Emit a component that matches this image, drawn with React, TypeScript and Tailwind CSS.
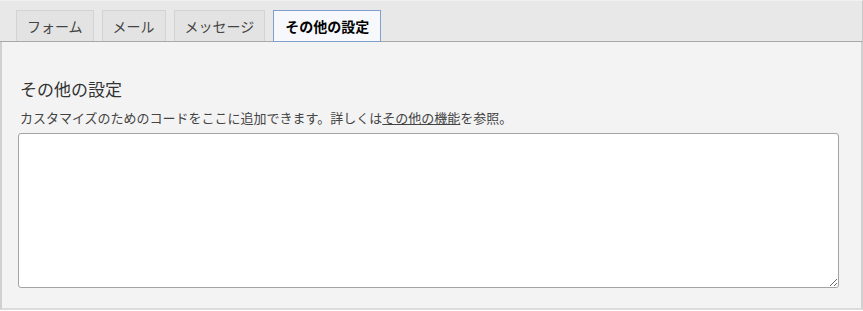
import { type JSX } from "react";

const tabs = ["フォーム", "メール", "メッセージ", "その他の設定"];

export default function App(): JSX.Element {
  const active = 3;
  return (
    <div
      className="w-[863px] h-[311px] bg-white text-[#333]"
      style={{ fontFamily: '"Noto Sans CJK JP", "Noto Sans", sans-serif' }}
    >
      {/* タブ */}
      <div className="h-[42px] bg-[#e8e8e8] border-t border-[#f0f0f0] border-r border-r-[#c8c8c8] border-b border-b-[#a8a8a8] flex items-end gap-2 pl-4">
        {tabs.map((t, i) => (
          <div
            key={t}
            className={
              i === active
                ? "h-[32px] px-[11px] flex items-center text-[14px] font-bold text-black bg-[#f6f8fc] border border-[#7f9fcf] -mb-px"
                : "h-[31px] px-[10px] flex items-center text-[14px] text-[#444] bg-[#e3e3e3] border border-[#d3d3d3] border-b-0"
            }
          >
            {t}
          </div>
        ))}
      </div>

      {/* パネル */}
      <div className="h-[268px] bg-[#f3f3f3] border-l-2 border-l-[#d0d0d0] border-r-2 border-r-[#d0d0d0] border-b-2 border-b-[#dcdcdc] pl-[16px] pr-[23px] pt-[35px]">
        <h2 className="text-[17px] leading-[24px] text-[#333] pl-[2px]">その他の設定</h2>
        <p className="mt-[8px] text-[13px] leading-[18px] text-[#444] pl-[2px]">
          カスタマイズのためのコードをここに追加できます。詳しくは
          <span className="underline">その他の機能</span>を参照。
        </p>
        <textarea className="mt-[6px] block w-[821px] h-[155px] bg-white border border-[#a3a3a3] rounded-[3px] outline-none resize" />
      </div>
    </div>
  );
}
